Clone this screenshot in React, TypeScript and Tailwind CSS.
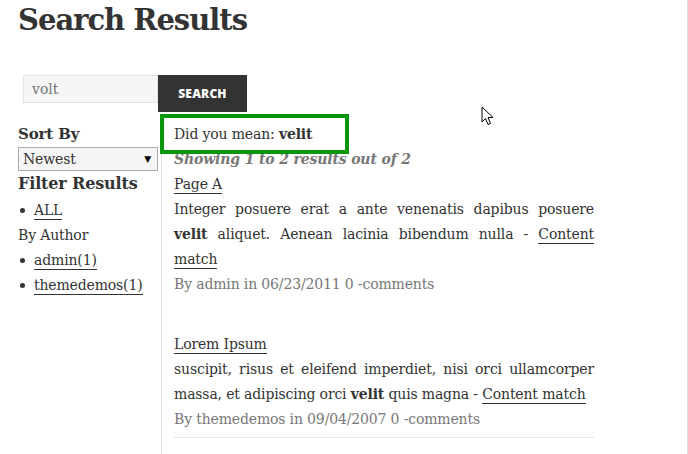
import React from "react";

const serif = "font-['DejaVu_Serif',serif]";

function Line({ children, justify = true }: { children: React.ReactNode; justify?: boolean }) {
  return (
    <div className={justify ? "text-justify [text-align-last:justify]" : "whitespace-nowrap"}>{children}</div>
  );
}

function Link({ children }: { children: React.ReactNode }) {
  return <span className="border-b border-[#333] pb-[1px]">{children}</span>;
}

function Bullet() {
  return <span className="inline-block align-middle w-[5px] h-[5px] rounded-full bg-[#333] ml-[2px] mr-[9px] relative -top-[1px]" />;
}

export default function App() {
  return (
    <div className={`relative w-[688px] h-[454px] overflow-hidden bg-white border-r border-[#dcdcdc] text-[#333] ${serif}`}>
      <h1 className="pl-[18px] pt-[1px] text-[29px] leading-[38px] font-bold tracking-[-1px] text-[#333]">Search Results</h1>

      <div className="flex pl-[23px] mt-[36px]">
        <div className="w-[135px] h-[28px] bg-[#f5f5f5] border border-[#e3e3e3] pl-[8px] text-[14px] leading-[26px] text-[#777]">
          volt
        </div>
        <div className="w-[89px] h-[37px] bg-[#333] flex items-center justify-center text-white text-[12px] font-extrabold font-['Open_Sans',sans-serif] tracking-[0.2px]">
          SEARCH
        </div>
      </div>

      <div className="flex mt-[2px] text-[14px] leading-[25px] tracking-[-0.15px]">
        <aside className="w-[161px] pl-[18px] pt-[8px] shrink-0">
          <div className="font-bold text-[15px]">Sort By</div>
          <div className="w-[140px] h-[24px] bg-[#f5f5f5] border border-[#aaa] flex items-center justify-between pl-[4px] pr-[6px] text-[14px]">
            <span>Newest</span>
            <span className="text-[9px] text-black">▼</span>
          </div>
          <div className="font-bold text-[16px] mb-[2px]">Filter Results</div>
          <ul>
            <li className="h-[25px] whitespace-nowrap">
              <Bullet />
              <Link>ALL</Link>
            </li>
          </ul>
          <div>By Author</div>
          <ul>
            <li className="h-[25px] whitespace-nowrap">
              <Bullet />
              <Link>admin(1)</Link>
            </li>
            <li className="h-[25px] whitespace-nowrap">
              <Bullet />
              <Link>themedemos(1)</Link>
            </li>
          </ul>
        </aside>

        <main className="flex-1 border-l border-[#dedede] h-[340px]">
          <div className="relative -ml-[2px] w-[189px] h-[40px] border-4 border-[#0a960a] pl-[10px] flex items-center">
            <span>
              Did you mean: <b>velit</b>
            </span>
          </div>
          <div className="pl-[12px] w-[432px] -mt-[7px]">
            <div className="italic font-bold text-[#777]">Showing 1 to 2 results out of 2</div>

            <div className="mb-[35px]">
              <div><Link>Page A</Link></div>
              <Line>Integer posuere erat a ante venenatis dapibus posuere</Line>
              <Line>
                <b>velit</b> aliquet. Aenean lacinia bibendum nulla - <Link>Content</Link>
              </Line>
              <Line justify={false}><Link>match</Link></Line>
              <div className="text-[#777]">By admin in 06/23/2011 0 -comments</div>
            </div>

            <div className="border-b border-[#e6e6e6] pb-[5px]">
              <div><Link>Lorem Ipsum</Link></div>
              <Line>suscipit, risus et eleifend imperdiet, nisi orci ullamcorper</Line>
              <Line justify={false}>
                massa, et adipiscing orci <b>velit</b> quis magna - <Link>Content match</Link>
              </Line>
              <div className="text-[#777]">By themedemos in 09/04/2007 0 -comments</div>
            </div>
          </div>
        </main>
      </div>

      <svg className="absolute left-[481px] top-[106px]" width="14" height="20" viewBox="0 0 14 20">
        <path d="M1 1 L1 16 L4.5 12.5 L7 18.5 L9.5 17.5 L7 11.5 L12 11.5 Z" fill="white" stroke="black" strokeWidth="1" strokeLinejoin="round" />
      </svg>
    </div>
  );
}
